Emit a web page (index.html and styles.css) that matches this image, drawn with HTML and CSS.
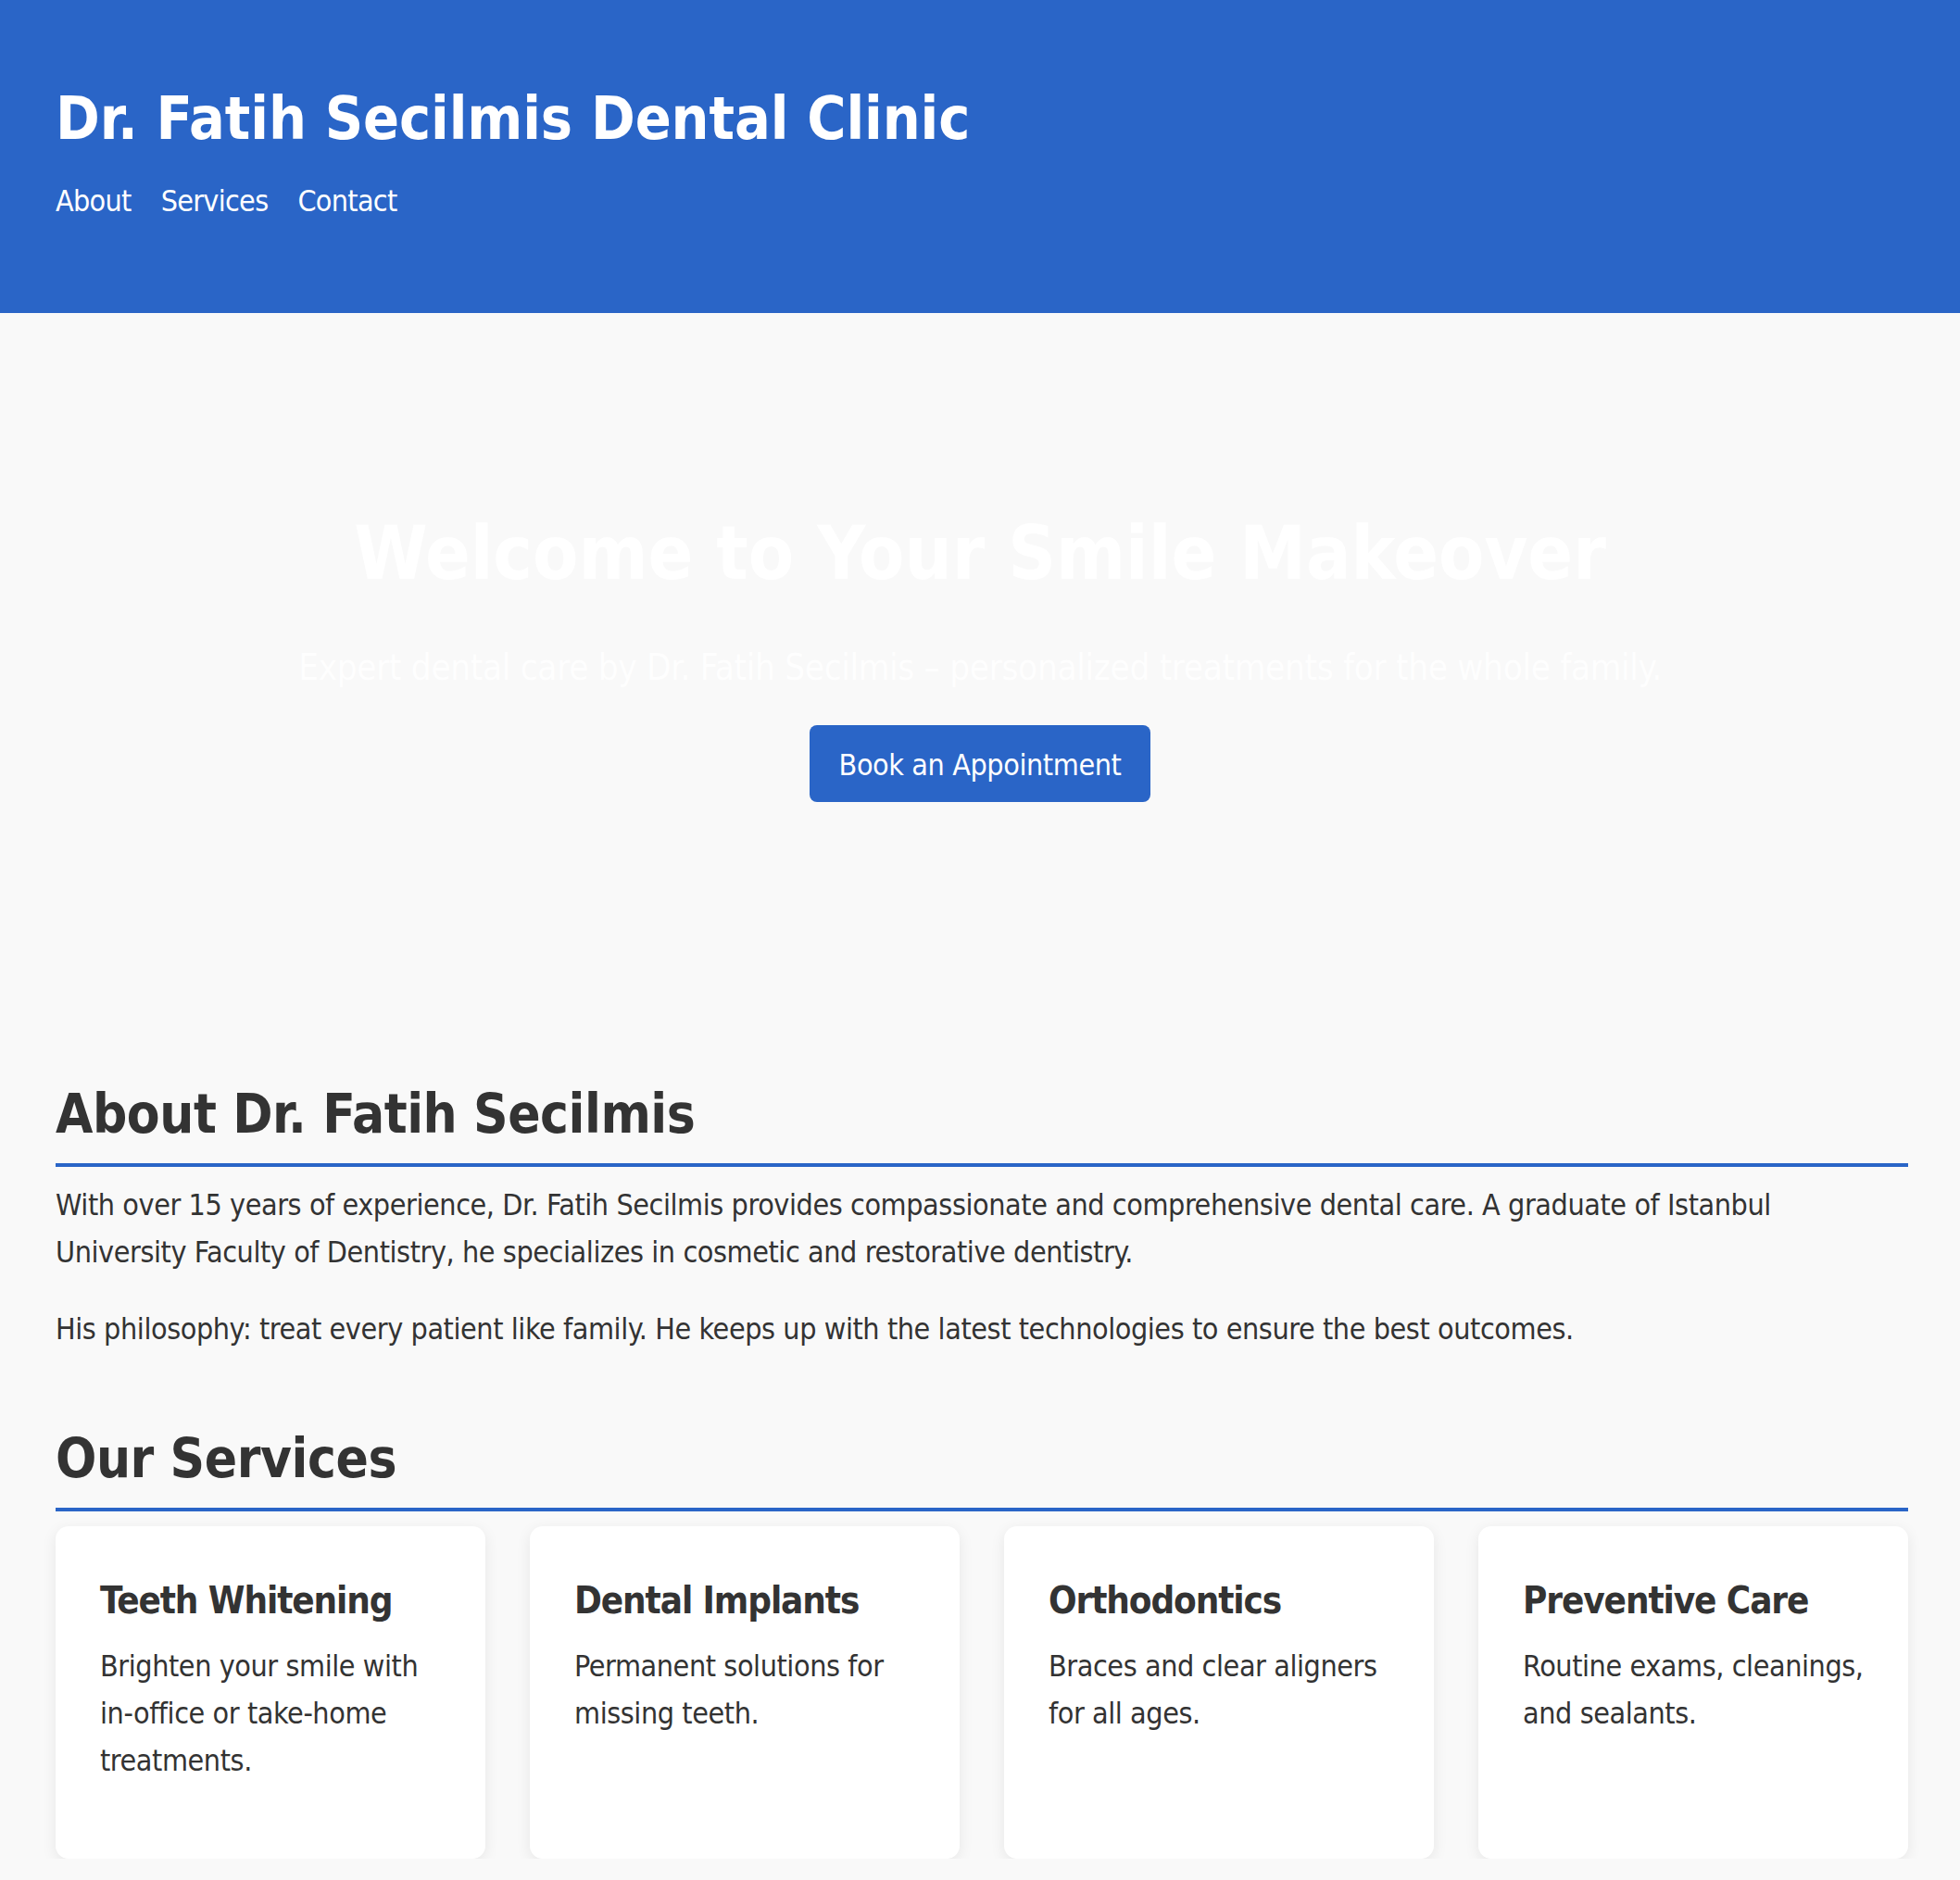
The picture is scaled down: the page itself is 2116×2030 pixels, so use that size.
FILE: index.html
```html
<!DOCTYPE html>
<html lang="en">
<head>
<meta charset="utf-8">
<title>Dr. Fatih Secilmis Dental Clinic</title>
<link rel="stylesheet" href="styles.css">
</head>
<body>
<header class="site-header">
  <h1 class="brand">Dr. Fatih Secilmis Dental Clinic</h1>
  <nav class="nav">
    <a class="nav-link" href="#about">About</a>
    <a class="nav-link" href="#services">Services</a>
    <a class="nav-link" href="#contact">Contact</a>
  </nav>
</header>

<section class="hero">
  <h2 class="hero-title">Welcome to Your Smile Makeover</h2>
  <p class="hero-sub">Expert dental care by Dr. Fatih Secilmis – personalized treatments for the whole family.</p>
  <a class="btn" href="#contact">Book an Appointment</a>
</section>

<main class="content">
  <section class="section" id="about">
    <h2 class="section-title">About Dr. Fatih Secilmis</h2>
    <p class="text">With over 15 years of experience, Dr. Fatih Secilmis provides compassionate and comprehensive dental care. A graduate of Istanbul University Faculty of Dentistry, he specializes in cosmetic and restorative dentistry.</p>
    <p class="text">His philosophy: treat every patient like family. He keeps up with the latest technologies to ensure the best outcomes.</p>
  </section>

  <section class="section" id="services">
    <h2 class="section-title">Our Services</h2>
    <div class="cards">
      <div class="card">
        <h3 class="card-title">Teeth Whitening</h3>
        <p class="card-text">Brighten your smile with in-office or take-home treatments.</p>
      </div>
      <div class="card">
        <h3 class="card-title">Dental Implants</h3>
        <p class="card-text">Permanent solutions for missing teeth.</p>
      </div>
      <div class="card">
        <h3 class="card-title">Orthodontics</h3>
        <p class="card-text">Braces and clear aligners for all ages.</p>
      </div>
      <div class="card">
        <h3 class="card-title">Preventive Care</h3>
        <p class="card-text">Routine exams, cleanings, and sealants.</p>
      </div>
    </div>
  </section>
</main>
</body>
</html>
```

FILE: styles.css
```css
* { box-sizing: border-box; }

html, body {
  margin: 0;
  padding: 0;
}

body {
  background: #f9f9f9;
  color: #333333;
  font-family: "DejaVu Sans Condensed", "DejaVu Sans", "Liberation Sans", sans-serif;
  font-stretch: condensed;
  font-size: 32px;
  line-height: 51.2px;
  letter-spacing: -0.42px;
}

.site-header {
  background: #2a65c7;
  color: #ffffff;
  padding: 88px 60px 101px 60px;
}

.brand {
  margin: 0;
  font-size: 64px;
  line-height: 80px;
  font-weight: bold;
  letter-spacing: -0.1px;
}

.nav {
  display: flex;
  gap: 32px;
  margin-top: 29px;
}

.nav-link {
  color: #ffffff;
  text-decoration: none;
  font-size: 32px;
  line-height: 40px;
  letter-spacing: -0.7px;
}

.hero {
  display: flex;
  flex-direction: column;
  align-items: center;
  text-align: center;
  padding: 212px 60px 200px 60px;
  color: #ffffff;
}

.hero-title {
  margin: 0;
  font-size: 80px;
  line-height: 96px;
  font-weight: bold;
  letter-spacing: 0;
}

.hero-sub {
  margin: 51px 0 0 0;
  font-size: 38.4px;
  line-height: 48px;
  letter-spacing: -0.35px;
  opacity: 0.92;
}

.btn {
  display: inline-block;
  margin-top: 38px;
  padding: 23px 32px 20px 32px;
  background: #2a65c7;
  color: #ffffff;
  text-decoration: none;
  font-size: 32px;
  line-height: 40px;
  letter-spacing: -0.4px;
  border-radius: 8px;
}

.content {
  padding: 102px 56px 0 60px;
}

.section + .section {
  margin-top: 78px;
}

.section-title {
  margin: 0 0 16px 0;
  padding-bottom: 18px;
  border-bottom: 4px solid #2a65c7;
  font-size: 58px;
  line-height: 70px;
  font-weight: bold;
  letter-spacing: -0.45px;
  color: #333333;
}

.text {
  margin: 0 0 32px 0;
}

.cards {
  display: grid;
  grid-template-columns: repeat(4, 1fr);
  gap: 48px;
}

.card {
  background: #ffffff;
  border-radius: 14px;
  padding: 56px 48px 48px 48px;
  box-shadow: 0 4px 16px rgba(0, 0, 0, 0.08);
}

.card-title {
  margin: 0 0 22px 0;
  font-size: 40px;
  line-height: 48px;
  font-weight: bold;
  letter-spacing: -1.1px;
  color: #333333;
}

.card-text {
  margin: 0 0 32px 0;
}
```
